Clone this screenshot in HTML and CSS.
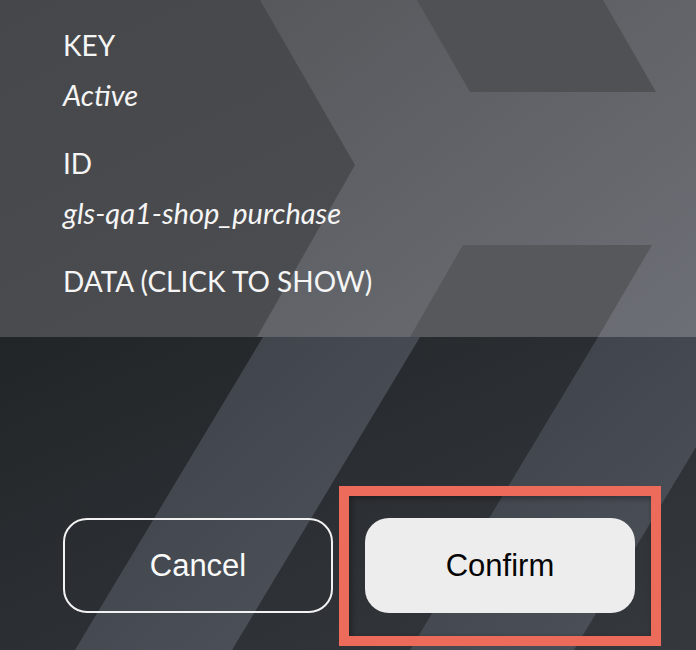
FILE: index.html
```html
<!DOCTYPE html>
<html lang="en">
<head>
    <meta charset="UTF-8">
    <meta name="viewport" content="width=device-width, initial-scale=1.0">
    <title>Confirm</title>
    <link rel="stylesheet" href="styles.css">
</head>
<body>
    <div class="sheet">
        <div class="info">
            <!-- chevron artwork behind the details -->
            <svg class="bg" width="696" height="337" viewBox="0 0 696 337">
                <defs>
                    <linearGradient id="infoBase" x1="0" y1="0" x2="1" y2="1">
                        <stop offset="0" stop-color="#46474a"/>
                        <stop offset="1" stop-color="#4e4f52"/>
                    </linearGradient>
                    <linearGradient id="infoLight" x1="0" y1="0" x2="1" y2="1">
                        <stop offset="0" stop-color="#56585c"/>
                        <stop offset="1" stop-color="#6c6f75"/>
                    </linearGradient>
                </defs>
                <rect width="696" height="337" fill="url(#infoBase)"/>
                <polygon points="260,0 355,165 257,337 696,337 696,0" fill="url(#infoLight)"/>
                <polygon points="417,0 603,0 656,92 470,92" fill="#4f5154"/>
                <polygon points="463,245 652,245 598,337 410,337" fill="#56585b"/>
            </svg>
            <div class="field">
                <div class="label">KEY</div>
                <div class="value">Active</div>
            </div>
            <div class="field">
                <div class="label">ID</div>
                <div class="value">gls-qa1-shop_purchase</div>
            </div>
            <div class="field">
                <div class="label">DATA (CLICK TO SHOW)</div>
            </div>
        </div>
        <div class="actions">
            <svg class="bg" width="696" height="313" viewBox="0 0 696 313">
                <defs>
                    <linearGradient id="actBase" x1="0" y1="0" x2="1" y2="1">
                        <stop offset="0" stop-color="#222528"/>
                        <stop offset="1" stop-color="#35383d"/>
                    </linearGradient>
                    <linearGradient id="actStripe" x1="0" y1="0" x2="1" y2="1">
                        <stop offset="0" stop-color="#3b3f46"/>
                        <stop offset="1" stop-color="#50545c"/>
                    </linearGradient>
                </defs>
                <rect width="696" height="313" fill="url(#actBase)"/>
                <polygon points="263,0 420,0 232,313 75,313" fill="url(#actStripe)"/>
                <polygon points="598,0 762,0 574,313 410,313" fill="url(#actStripe)"/>
            </svg>
            <button class="btn cancel">Cancel</button>
            <button class="btn confirm">Confirm</button>
        </div>
    </div>
</body>
</html>
```

FILE: styles.css
```css
body{
    margin:0;
    background:#2b2e32;
}
.sheet{
    width:696px;
    height:650px;
    overflow:hidden;
}
.bg{
    position:absolute;
    left:0;
    top:0;
    z-index:0;
}
.info{
    position:relative;
    height:337px;
    box-sizing:border-box;
    padding:25px 0 0 63px;
    color:#f5f5f5;
    font-family:"Lato","Noto Sans",sans-serif;
    font-size:28px;
}
.field{
    position:relative;
    z-index:1;
    margin-bottom:28px;
}
.label{
    height:40px;
    line-height:40px;
}
.value{
    height:40px;
    line-height:40px;
    margin-top:10px;
    font-size:29px;
    font-style:italic;
}
.actions{
    position:relative;
    height:313px;
    box-sizing:border-box;
    padding:181px 0 0 63px;
    display:flex;
    gap:32px;
}
.btn{
    position:relative;
    z-index:1;
    width:270px;
    height:95px;
    border-radius:24px;
    font-family:"Liberation Sans",Arial,sans-serif;
    font-size:31px;
    cursor:pointer;
}
.cancel{
    background:transparent;
    border:2px solid #f2f2f2;
    color:#fafafa;
}
.confirm{
    background:#ededed;
    border:none;
    color:#050505;
}
/* annotation frame round the confirm button */
.confirm::after{
    content:"";
    position:absolute;
    left:-26px;
    right:-26px;
    top:-32px;
    bottom:-33px;
    border:10px solid #ec6b5b;
    box-shadow:inset 2px 2px 6px rgba(0,0,0,0.35);
    pointer-events:none;
}
```
